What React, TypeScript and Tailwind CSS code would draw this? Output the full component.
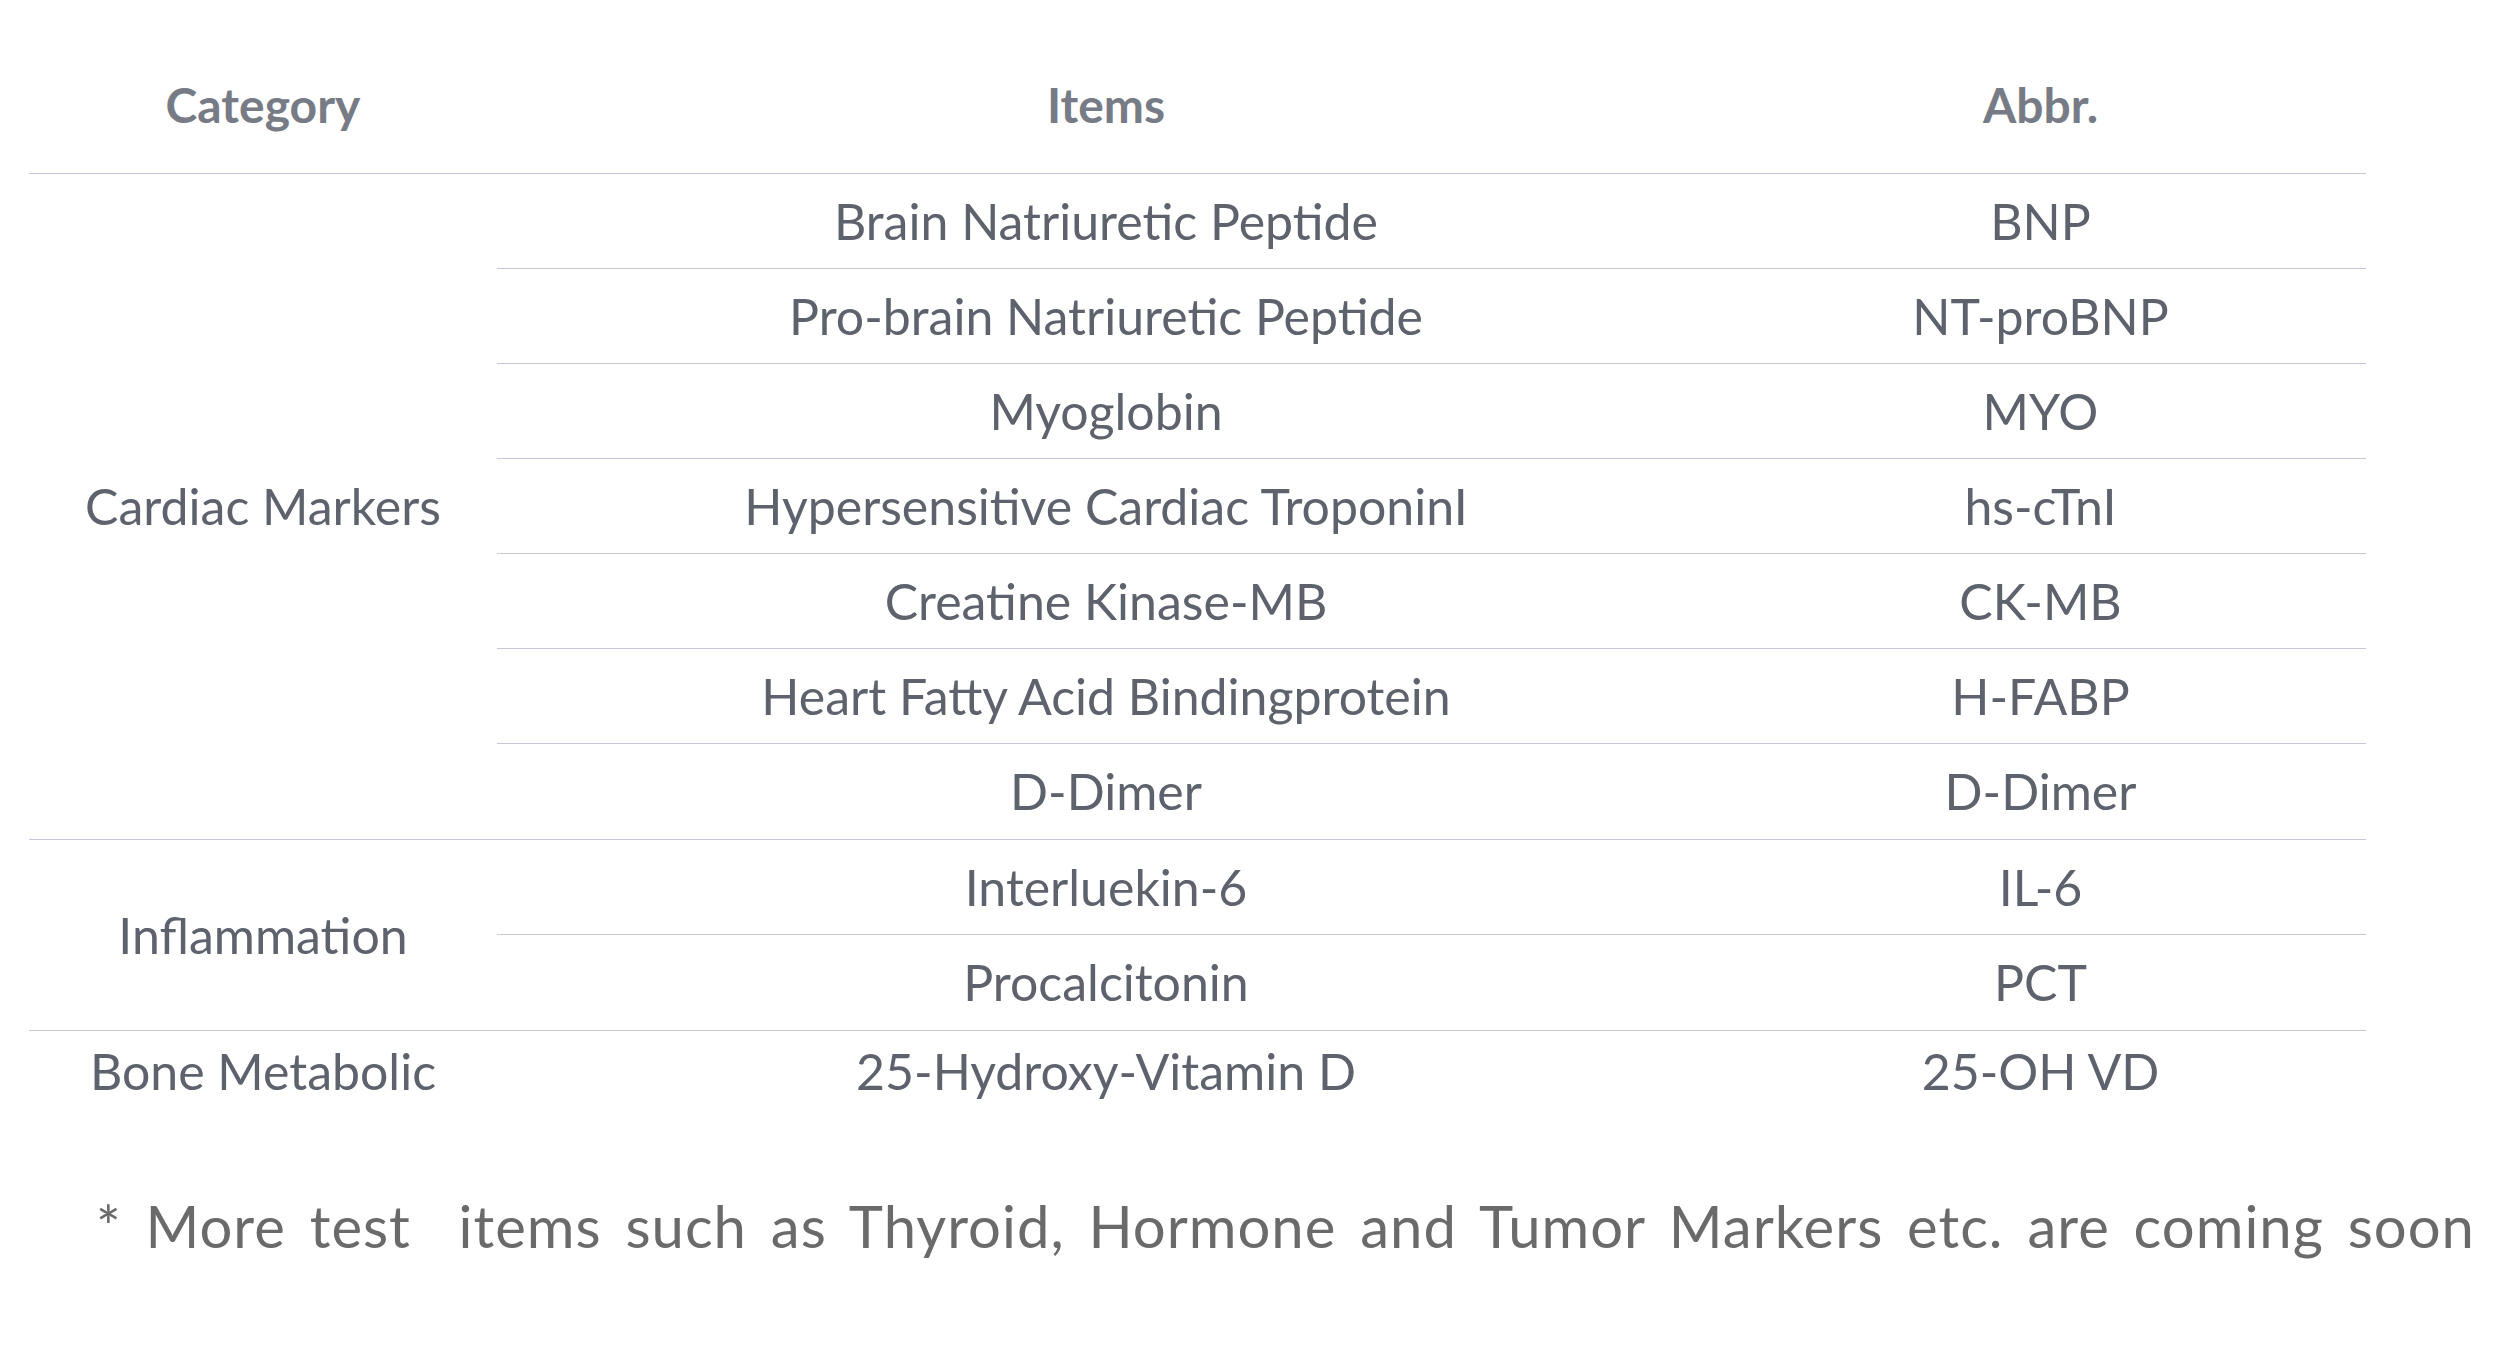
const groups = [
  {
    category: "Cardiac Markers",
    rows: [
      ["Brain Natriuretic Peptide", "BNP"],
      ["Pro-brain Natriuretic Peptide", "NT-proBNP"],
      ["Myoglobin", "MYO"],
      ["Hypersensitive Cardiac TroponinI", "hs-cTnI"],
      ["Creatine Kinase-MB", "CK-MB"],
      ["Heart Fatty Acid Bindingprotein", "H-FABP"],
      ["D-Dimer", "D-Dimer"],
    ],
  },
  {
    category: "Inflammation",
    rows: [
      ["Interluekin-6", "IL-6"],
      ["Procalcitonin", "PCT"],
    ],
  },
];

export default function App() {
  return (
    <div className="min-h-screen bg-white font-['Lato','Liberation_Sans',sans-serif]">
      <div className="ml-[29px] w-[2337px] pt-[37px]">
        {/* Header */}
        <div className="grid h-[137px] grid-cols-[468px_1218px_651px] items-center border-b border-[#c4c8da] text-center text-[48px] font-bold text-[#777b86]">
          <div>Category</div>
          <div>Items</div>
          <div>Abbr.</div>
        </div>

        {/* Groups with sub rows */}
        {groups.map((group) => (
          <div key={group.category} className="flex border-b border-[#c4c8da] text-[50px] text-[#5d626c]">
            <div className="flex w-[468px] items-center justify-center">{group.category}</div>
            <div className="flex-1 divide-y divide-[#c4c8da]">
              {group.rows.map(([item, abbr]) => (
                <div key={item} className="grid h-[95px] grid-cols-[1218px_651px] items-center text-center">
                  <div>{item}</div>
                  <div>{abbr}</div>
                </div>
              ))}
            </div>
          </div>
        ))}

        {/* Last row, no bottom line */}
        <div className="grid h-[80px] grid-cols-[468px_1218px_651px] items-center text-center text-[50px] text-[#5d626c]">
          <div>Bone Metabolic</div>
          <div>25-Hydroxy-Vitamin D</div>
          <div>25-OH VD</div>
        </div>
      </div>

      {/* Footnote */}
      <p className="ml-[96px] mt-[71px] whitespace-pre text-[58px] tracking-[1px] text-[#6a6a6a] [word-spacing:8px]">
        {"* More test  items such as Thyroid, Hormone and Tumor Markers etc. are coming soon"}
      </p>
    </div>
  );
}
